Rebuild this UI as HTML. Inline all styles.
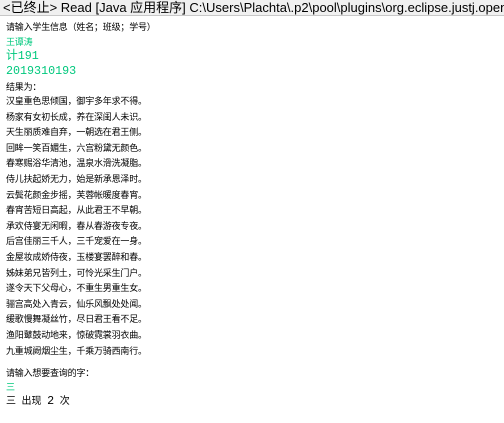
<!DOCTYPE html>
<html><head><meta charset="utf-8"><style>
html,body{margin:0;padding:0;width:504px;height:423px;overflow:hidden;background:#fff;}
#hd{position:absolute;left:0;top:0;width:504px;height:16px;background:#f0f0f0;border-bottom:1px solid #c8c8c8;font:13px "Liberation Sans","Noto Sans CJK SC",sans-serif;color:#000;white-space:nowrap;line-height:15px;padding-left:3px;box-sizing:border-box;}
.l{position:absolute;left:6px;white-space:nowrap;font-family:"Liberation Sans","Noto Sans CJK SC",sans-serif;font-size:9px;line-height:11px;color:#000;letter-spacing:-0.2px;}
.g{color:#00c87d;}
.m{font-family:"Liberation Mono","Noto Sans CJK SC",monospace;font-size:11.7px;line-height:13px;letter-spacing:0;}
</style></head><body>
<div id="hd">&lt;已终止&gt; Read [Java 应用程序] C:\Users\Plachta\.p2\pool\plugins\org.eclipse.justj.openjdk</div>
<div class="l" style="top:22px">请输入学生信息（姓名；班级；学号）</div>
<div class="l g" style="top:37px">王谭涛</div>
<div class="l g m" style="top:50px">计191</div>
<div class="l g m" style="top:65px">2019310193</div>
<div class="l" style="top:82px">结果为：</div>
<div class="l" style="top:96px">汉皇重色思倾国，御宇多年求不得。</div>
<div class="l" style="top:111.6px">杨家有女初长成，养在深闺人未识。</div>
<div class="l" style="top:127.2px">天生丽质难自弃，一朝选在君王侧。</div>
<div class="l" style="top:142.8px">回眸一笑百媚生，六宫粉黛无颜色。</div>
<div class="l" style="top:158.4px">春寒赐浴华清池，温泉水滑洗凝脂。</div>
<div class="l" style="top:174px">侍儿扶起娇无力，始是新承恩泽时。</div>
<div class="l" style="top:189.6px">云鬓花颜金步摇，芙蓉帐暖度春宵。</div>
<div class="l" style="top:205.2px">春宵苦短日高起，从此君王不早朝。</div>
<div class="l" style="top:220.8px">承欢侍宴无闲暇，春从春游夜专夜。</div>
<div class="l" style="top:236.4px">后宫佳丽三千人，三千宠爱在一身。</div>
<div class="l" style="top:252px">金屋妆成娇侍夜，玉楼宴罢醉和春。</div>
<div class="l" style="top:267.6px">姊妹弟兄皆列土，可怜光采生门户。</div>
<div class="l" style="top:283.2px">遂令天下父母心，不重生男重生女。</div>
<div class="l" style="top:298.8px">骊宫高处入青云，仙乐风飘处处闻。</div>
<div class="l" style="top:314.4px">缓歌慢舞凝丝竹，尽日君王看不足。</div>
<div class="l" style="top:330px">渔阳鼙鼓动地来，惊破霓裳羽衣曲。</div>
<div class="l" style="top:345.6px">九重城阙烟尘生，千乘万骑西南行。</div>
<div class="l" style="top:368px">请输入想要查询的字：</div>
<div class="l g" style="top:382px">三</div>
<div class="l" style="top:395px;font-size:10px;line-height:13px;letter-spacing:0">三 &nbsp;出现 &nbsp;<span style="font-family:'Liberation Mono',monospace;font-size:11.7px">2</span> &nbsp;次</div>
</body></html>
